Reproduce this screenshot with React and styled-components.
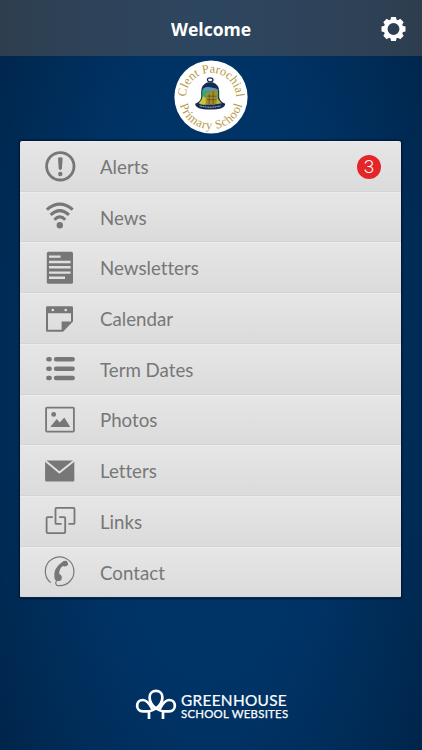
import React from 'react'
import styled, { createGlobalStyle } from 'styled-components'

const theme = {
  ink: '#777777',
  badge: '#e52629',
  gold: '#b59a45',
  navy: '#152c52',
}

const GlobalStyle = createGlobalStyle`
  * {
    box-sizing: border-box;
  }
  body {
    margin: 0;
    background: #003265;
  }
`

const Screen = styled.div`
  display: flex;
  flex-direction: column;
  align-items: center;
  width: 422px;
  height: 750px;
  overflow: hidden;
  font-family: Lato, sans-serif;
  background: radial-gradient(ellipse 64% 90% at 50% 50%, #00376b 0%, #003365 50%, #002a54 80%, #002348 100%);
`

const Header = styled.header`
  flex: none;
  display: grid;
  grid-template-columns: 56px 1fr 56px;
  align-items: center;
  justify-items: center;
  width: 100%;
  height: 56px;
  padding-top: 1.5px;
  background: linear-gradient(90deg, #2e3e4f 0%, #2e435a 25%, #2d465f 50%, #2e435a 75%, #2e3e4f 100%);
`

const Title = styled.h1`
  grid-column: 2;
  margin: 0;
  font: 700 18px/24px "Open Sans", sans-serif;
  color: #fff;
  transform: scaleX(0.975);
`

const Crest = styled.svg`
  flex: none;
  display: block;
  width: 74px;
  height: 74px;
  margin-top: 4px;
`

const Menu = styled.nav`
  flex: none;
  width: 381px;
  height: 456.5px;
  margin: 7px 1px 0 0;
  display: grid;
  grid-template-rows: repeat(9, 1fr);
  border-radius: 2px;
  overflow: hidden;
  box-shadow: 0 0 2px 1px rgba(0, 10, 25, 0.75);
`

const MenuItem = styled.a`
  display: grid;
  grid-template-columns: 32px 1fr auto;
  column-gap: 24px;
  align-items: center;
  padding: 0 20px 0 24px;
  color: ${theme.ink};
  background: linear-gradient(#e6e6e6, #dbdbdb);
  border-top: 1px solid #ececec;
  border-bottom: 1px solid #d4d4d4;
`

const ItemIcon = styled.svg`
  display: block;
  width: 32px;
  height: 36px;
  fill: none;
  stroke: none;
`

const Label = styled.span`
  padding-bottom: 1px;
  font-size: 20px;
  line-height: 24px;
  font-variant-ligatures: none;
  transform: scaleX(0.935);
  transform-origin: left;
`

const Badge = styled.span`
  width: 24px;
  height: 24px;
  margin-top: 2px;
  border-radius: 50%;
  background: ${theme.badge};
  color: #fff;
  font: 300 19px/24px Roboto, sans-serif;
  text-align: center;
`

const Footer = styled.footer`
  display: flex;
  align-items: flex-start;
  gap: 4px;
  margin-top: 91px;
  color: #fff;
`

const Brand = styled.div`
  width: 106px;
  padding-top: 4px;
`

const BrandLine = styled.div`
  font-size: ${p => p.$size}px;
  line-height: ${p => p.$height}px;
  letter-spacing: ${p => p.$spacing}px;
  -webkit-text-stroke: ${p => p.$stroke}px #fff;
  white-space: nowrap;
`

const icons = {
  alerts: (
    <>
      <circle cx="16.3" cy="18.3" r="13.7" stroke={theme.ink} strokeWidth="2.8" />
      <path d="M14 10.6 Q14 9.2 16.3 9.2 Q18.6 9.2 18.6 10.6 L17.9 20.6 Q17.8 22 16.3 22 Q14.8 22 14.7 20.6 Z" fill={theme.ink} />
      <circle cx="16.3" cy="26" r="2.2" fill={theme.ink} />
    </>
  ),
  news: (
    <>
      <g stroke={theme.ink} strokeWidth="3.1">
        <path d="M2.9 10.6Q15.8 -0.4 28.7 10.6" />
        <path d="M6.6 15.8Q15.8 7.4 25 15.8" />
        <path d="M10.4 20.8Q15.8 15 21.2 20.8" />
      </g>
      <circle cx="15.8" cy="26.2" r="3.2" fill={theme.ink} />
    </>
  ),
  newsletters: (
    <>
      <rect x="2.8" y="1.8" width="26.2" height="32" rx="1.6" fill={theme.ink} />
      <path d="M5 6.6H16.6M5 12H26.6M5 17.3H26.6M5 22.6H26.6M5 27.7H21" stroke="#e0e0e0" strokeWidth="2.4" />
    </>
  ),
  calendar: (
    <>
      <path fillRule="evenodd" d="M3.2 5.3H27.8Q29 5.3 29 6.5V20.6L19 30.8H3.2Q2 30.8 2 29.6V6.5Q2 5.3 3.2 5.3ZM4 12.2V28.8H17.6V20.4H27V12.2Z" fill={theme.ink} />
      <circle cx="8.8" cy="9" r="1.3" fill="#e4e4e4" />
      <circle cx="21.7" cy="9" r="1.3" fill="#e4e4e4" />
    </>
  ),
  dates: (
    <path d="M4.4 8.3H5.6M12.1 8.3H28.6M4.4 17.7H5.6M12.1 17.7H28.6M4.4 27H5.6M12.1 27H28.6" stroke={theme.ink} strokeWidth="4.6" strokeLinecap="round" />
  ),
  photos: (
    <>
      <rect x="2.1" y="5.6" width="27.8" height="24" rx="0.8" stroke={theme.ink} strokeWidth="1.8" />
      <circle cx="9.7" cy="12.4" r="2.4" fill={theme.ink} />
      <path d="M6.3 25L12.7 17L15.8 20.4L20.3 15.4L26.2 25Z" fill={theme.ink} />
    </>
  ),
  letters: (
    <>
      <rect x="1.1" y="7.4" width="29.2" height="21.2" rx="1" fill={theme.ink} />
      <path d="M1 7.6L15.4 19.6L30.4 7.6" stroke="#e2e2e2" strokeWidth="1.9" />
    </>
  ),
  links: (
    <g stroke={theme.ink} strokeWidth="1.8" strokeLinejoin="round">
      <path d="M8.9 14.1H3.6Q2.6 14.1 2.6 15.1V29.1Q2.6 30.1 3.6 30.1H20.2Q21.2 30.1 21.2 29.1V15.1Q21.2 14.1 20.2 14.1H15.2" />
      <path d="M17.6 20.9H12.5Q11.5 20.9 11.5 19.9V5.9Q11.5 4.9 12.5 4.9H29.5Q30.5 4.9 30.5 5.9V19.9Q30.5 20.9 29.5 20.9H24.4" />
    </g>
  ),
  contact: (
    <>
      <path d="M6.8 28.6A14.3 14.3 0 1 1 13 31.4Q10.6 29.3 12.6 27.2" stroke={theme.ink} strokeWidth="1.2" />
      <path d="M18 8.2Q20.3 6 22.7 7.1L23.7 8.4Q25 10.4 23.2 11.8Q20.6 13 19 12Q14.9 14.4 15.4 20.2Q18 21 17.8 23.8Q17.5 27.3 14.6 27Q11.2 27.7 10.4 23.7Q9 13.9 18 8.2Z" fill={theme.ink} />
    </>
  ),
}

const items = [
  { icon: 'alerts', label: 'Alerts', count: 3 },
  { icon: 'news', label: 'News' },
  { icon: 'newsletters', label: 'Newsletters' },
  { icon: 'calendar', label: 'Calendar' },
  { icon: 'dates', label: 'Term Dates' },
  { icon: 'photos', label: 'Photos' },
  { icon: 'letters', label: 'Letters' },
  { icon: 'links', label: 'Links' },
  { icon: 'contact', label: 'Contact' },
]

function Gear() {
  const teeth = [0, 45, 90, 135, 180, 225, 270, 315]
  return (
    <svg width="26" height="26" viewBox="-12.5 -13 26 26">
      <circle r="7.9" fill="none" stroke="#fff" strokeWidth="3.9" />
      {teeth.map(a => (
        <path key={a} transform={`rotate(${a})`} d="M-3.2 -8.5L-2.4 -12H2.4L3.2 -8.5Z" fill="#fff" />
      ))}
    </svg>
  )
}

function SchoolCrest() {
  return (
    <Crest viewBox="-37 -37 74 74">
      <defs>
        <path id="upper" d="M-25.3 1A25.3 25.3 0 1 1 25.3 1" />
        <path id="lower" d="M-32.2 0A32.2 32.2 0 0 0 32.2 0" />
      </defs>
      <circle r="36.6" fill="#fff" />
      <g fill={theme.gold} fontFamily="Liberation Serif, serif" fontSize="12.4" textAnchor="middle">
        <text><textPath href="#upper" startOffset="50%" textLength="77">Clent Parochial</textPath></text>
        <text><textPath href="#lower" startOffset="50%" textLength="85">Primary School</textPath></text>
      </g>
      <g transform="translate(-0.8 -0.8)">
        <ellipse cy="-16.4" rx="2.8" ry="2" fill="none" stroke={theme.navy} strokeWidth="1.3" />
        <path d="M-2.5 -14H2.5Q9 -11.5 9 -5V1Q9.5 5 15 7.500Q15 13.4 0 13.4Q-15 13.4 -15 7.500Q-9.5 5 -9 1V-5Q-9 -11.5 -2.5 -14Z" fill={theme.navy} />
        <path d="M-8 1V-5Q-7 -9 -3 -9L3 -5L8 -7V4H-8Z" fill="#36a867" />
        <path d="M-8 -6Q-5 -10 0 -9L5 -8L8 -7L3 -5Z" fill="#5e93bd" />
        <path d="M-11.5 7Q-8 3 -7 0L-4 2V8.5Q-9 9 -11.5 7Z" fill="#cbc83a" />
        <path d="M-4.5 -3H0V-6H7V1L9 6.5L4 8.5H-4.5Z" fill="#a58c2e" />
        <path d="M7 2L11.5 7L6 8Z" fill="#b9b83c" />
        <path d="M-3 0H6M-3 3.5H6M-1 -2V8M3 -5V8" stroke="#5d511f" strokeWidth="0.8" />
        <path d="M-10.5 9.6Q0 12.4 10.5 9.6" fill="none" stroke="#a6b1c3" strokeWidth="1.1" strokeDasharray="1.2 0.5" />
      </g>
    </Crest>
  )
}

function Trees() {
  return (
    <svg width="42" height="31" viewBox="0 0 42 31" fill="none" stroke="#fff" strokeWidth="2.7" strokeLinejoin="round">
      <path d="M14 30V22.3H8C0.200 22.3 0.200 11 8 11C12 11 14.500 14.500 17.500 20.500" />
      <path d="M28 30V22.3H34C41.800 22.3 41.800 11 34 11C30 11 27.500 14.500 24.500 20.500" />
      <path d="M13.500 22.3Q18.5 22 21 19Q23.5 22 28.500 22.3" strokeWidth="2" />
      <path d="M21 19.6C17.2 16.500 14.600 12.5 14.600 8.4C14.600 -0.200 27.400 -0.200 27.400 8.4C27.400 12.5 24.800 16.500 21 19.6Z" />
    </svg>
  )
}

export default function App() {
  return (
    <Screen>
      <GlobalStyle />
      <Header>
        <Title>Welcome</Title>
        <Gear />
      </Header>
      <SchoolCrest />
      <Menu>
        {items.map(({ icon, label, count }) => (
          <MenuItem key={icon}>
            <ItemIcon viewBox="0 0 32 36">{icons[icon]}</ItemIcon>
            <Label>{label}</Label>
            {count ? <Badge>{count}</Badge> : null}
          </MenuItem>
        ))}
      </Menu>
      <Footer>
        <Trees />
        <Brand>
          <BrandLine $size={15.4} $height={15} $spacing={0.3} $stroke={0.2}>GREENHOUSE</BrandLine>
          <BrandLine $size={11.4} $height={12} $spacing={0.25} $stroke={0.25}>SCHOOL WEBSITES</BrandLine>
        </Brand>
      </Footer>
    </Screen>
  )
}
